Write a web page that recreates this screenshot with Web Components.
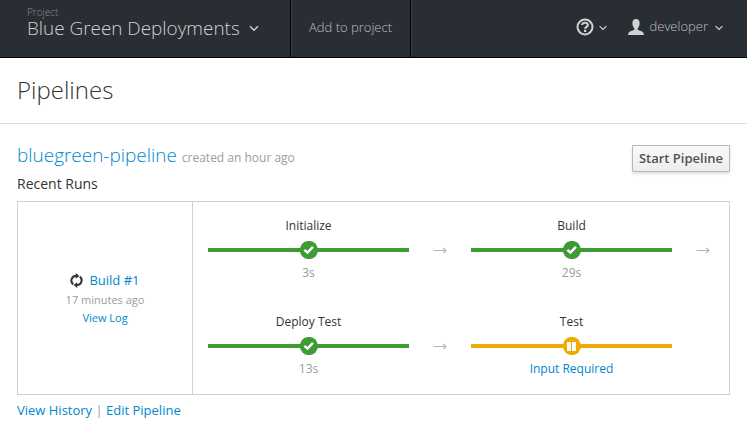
<!DOCTYPE html>
<html lang="en">
<head>
<meta charset="utf-8">
<title>Pipelines</title>
<style>
body { margin: 0; background: #fff; color: #333; font-family: "Open Sans", sans-serif; font-size: 12px; }
</style>
</head>
<body>
<pipelines-page></pipelines-page>
<script>
function define(name, template) {
  customElements.define(name, class extends HTMLElement {
    constructor() {
      super();
      this.attachShadow({ mode: 'open' }).innerHTML =
        typeof template === 'function' ? template(this) : template;
    }
  });
}

define('caret-down', `
<style>:host { display: block; width: 8px; height: 6px; flex: none; } svg { display: block; width: 100%; height: 100%; }</style>
<svg viewBox="0 0 8 6"><path d="M.6 1.1 4 4.5 7.4 1.1" fill="none" stroke="currentColor" stroke-width="1.2"/></svg>`);

define('nav-bar', `
<style>
:host { display: flex; height: 57px; background: #292e34; border-bottom: 1px solid #000; color: #d1d1d1; font-weight: 300; }
.project { box-sizing: border-box; width: 290px; padding: 5px 0 0 27px; }
.label { font-size: 10px; line-height: 14px; color: #8b8d8f; }
.name { display: flex; align-items: center; font-size: 18.9px; line-height: 18px; gap: 9px; white-space: nowrap; }
.name caret-down { margin-top: 1px; width: 10px; height: 7px; }
.add { box-sizing: border-box; width: 121px; border: solid #000; border-width: 0 1px; box-shadow: inset 1px 0 #3a3f45, 1px 0 #3a3f45; text-align: center; font-size: 13px; line-height: 55px; color: #bcbfc1; }
.tools { margin-left: auto; display: flex; align-items: center; padding: 0 24px 4px 0; }
.tools svg { flex: none; }
.help { margin-right: 5px; }
.user { margin: 1px 6px 0 21px; }
.who { font-size: 13px; color: #bcbfc1; margin: 0 7px 2px 0; }
.tools caret-down { margin-top: 3px; }
</style>
<div class="project"><div class="label">Project</div><div class="name"><span>Blue Green Deployments</span><caret-down></caret-down></div></div>
<div class="add">Add to project</div>
<div class="tools">
<svg class="help" width="18" height="18" viewBox="0 0 18 18"><circle cx="9" cy="9" r="7.5" fill="none" stroke="#d1d1d1" stroke-width="2"/><path d="M6.1 7.1C6.1 3.9 11.9 4 11.9 7 11.9 9 9.2 8.8 9.2 10.7" fill="none" stroke="#d1d1d1" stroke-width="2.2"/><path d="M8 11.7h2.3V14H8z" fill="#d1d1d1"/></svg>
<caret-down></caret-down>
<svg class="user" width="16" height="16" viewBox="0 0 16 16"><path fill="#d1d1d1" d="M8 0C5.5 0 4.2 1.6 4.4 4.5 4.5 6.7 5.2 8.4 6.3 9.2V10.8L2 12.5Q.1 13.3 0 16H16Q15.9 13.3 14 12.5L9.7 10.8V9.2C10.8 8.4 11.5 6.7 11.6 4.5 11.8 1.6 10.5 0 8 0Z"/></svg>
<span class="who">developer</span>
<caret-down></caret-down>
</div>`);

define('page-heading', `
<style>
:host { display: block; box-sizing: border-box; height: 66px; padding: 15px 17px 0; border-bottom: 1px solid #ddd; font-size: 24px; line-height: 33px; font-weight: 300; }
</style><slot></slot>`);

define('action-button', `
<style>
:host { display: block; flex: none; }
button { display: block; box-sizing: border-box; width: 98px; height: 27px; padding: 0 0 2px; font: 600 13px/22px "Open Sans", sans-serif; color: #4d5258; background: linear-gradient(#fafafa, #ededed); border: 1px solid #b7b7b7; border-radius: 1px; box-shadow: 0 2px 3px rgba(3,3,3,.12); white-space: nowrap; }
</style><button><slot></slot></button>`);

define('run-summary', `
<style>
:host { display: flex; flex-direction: column; align-items: center; justify-content: center; width: 174px; border-right: 1px solid #d1d1d1; text-align: center; }
.build { display: flex; align-items: center; gap: 6px; font-size: 13px; line-height: 20px; }
a { color: #0088ce; }
.when { font-size: 11px; line-height: 18px; color: #9c9c9c; padding-top: 1px; }
.log { font-size: 11px; line-height: 18px; margin-bottom: -1px; }
</style>
<div class="build">
<svg width="13" height="15" viewBox="0 0 13 15"><g fill="none" stroke="#363636" stroke-width="2.1"><path d="M3.2 11.3A4.7 4.7 0 0 1 6.2 2.9"/><path d="M9.8 3.7A4.7 4.7 0 0 1 6.8 12.1"/></g><path fill="#363636" d="M5.8 0 9.4 3 5.8 5.8ZM7.2 15 3.6 12 7.2 9.2Z"/></svg>
<a>Build #1</a></div>
<div class="when">17 minutes ago</div>
<a class="log">View Log</a>`);

const marks = {
  done: '<path d="M4.5 8.9 7.5 11.6 13 5.9" fill="none" stroke="#fff" stroke-width="2.5"/>',
  paused: '<path d="M4.1 5h3.9v9H4.1zM9.1 5h3.9v9H9.1z" fill="#fff"/>'
};
define('pipeline-stage', el => `
<style>
:host { display: grid; grid-template-columns: 201px 62px; height: 96px; grid-template-rows: 19px 30px 17px; box-sizing: border-box; padding-top: 14px; --tone: #3f9c35; --note: #9c9c9c; text-align: center; font-size: 12px; }
:host([status="paused"]) { --tone: #f0ab00; --note: #0088ce; }
.name { line-height: 19px; }
.bar { display: flex; align-items: center; justify-content: center; background: linear-gradient(var(--tone), var(--tone)) center / 100% 4px no-repeat; }
.note { color: var(--note); line-height: 15px; }
.name, .bar, .note { grid-column: 1; }
.arrow { grid-column: 2; grid-row: 2; align-self: center; justify-self: center; }
</style>
<div class="name"><slot></slot></div>
<div class="bar"><svg width="19" height="18" viewBox="-.9 0 19 18"><circle cx="9" cy="9" r="9.1" fill="var(--tone)"/>${marks[el.getAttribute('status')]}</svg></div>
${el.hasAttribute('next') ? '<svg class="arrow" width="14" height="8" viewBox="0 0 14 8"><path d="M.5 4.5H13M10 1.8 13 4.5 10 7.2" fill="none" stroke="#b4b4b4" stroke-width="1.1"/></svg>' : ''}
<div class="note"><slot name="note"></slot></div>`);

define('pipeline-run', `
<style>
:host { display: flex; box-sizing: border-box; height: 194px; border: 1px solid #d1d1d1; }
.stages { display: grid; grid-template-columns: 263px 258px; padding-left: 15px; align-content: start; }
</style>
<run-summary></run-summary><div class="stages"><slot></slot></div>`);

define('pipelines-page', `
<style>
:host { display: block; }
main { padding: 21px 17px 0; }
.top { display: flex; justify-content: space-between; height: 27px; }
.title { display: flex; align-items: baseline; gap: 5px; line-height: 22px; margin-top: -1px; white-space: nowrap; }
.title a { font-size: 18.95px; font-weight: 300; }
.title small { font-size: 12px; color: #9c9c9c; }
a { color: #0088ce; }
.recent { font-size: 14px; line-height: 20px; padding: 2px 0 7px; }
footer { font-size: 13px; line-height: 20px; padding-top: 5px; color: #9c9c9c; }
</style>
<nav-bar></nav-bar>
<page-heading>Pipelines</page-heading>
<main>
<div class="top"><div class="title"><a>bluegreen-pipeline</a><small>created an hour ago</small></div><action-button>Start Pipeline</action-button></div>
<div class="recent">Recent Runs</div>
<pipeline-run>
<pipeline-stage status="done" next>Initialize<span slot="note">3s</span></pipeline-stage>
<pipeline-stage status="done" next>Build<span slot="note">29s</span></pipeline-stage>
<pipeline-stage status="done" next>Deploy Test<span slot="note">13s</span></pipeline-stage>
<pipeline-stage status="paused">Test<span slot="note">Input Required</span></pipeline-stage>
</pipeline-run>
<footer><a>View History</a> | <a>Edit Pipeline</a></footer>
</main>`);
</script>
</body>
</html>
